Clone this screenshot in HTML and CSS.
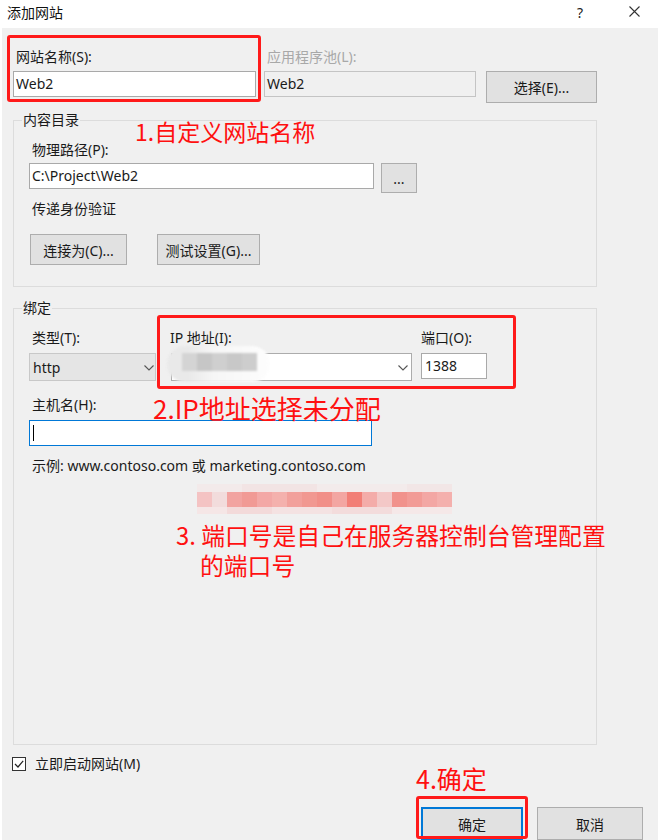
FILE: index.html
```html
<!DOCTYPE html>
<html lang="zh-CN">
<head>
<meta charset="utf-8">
<title>添加网站</title>
<link rel="stylesheet" href="styles.css">
</head>
<body>
<div class="page">
  <header class="titlebar">
    <span class="title">添加网站</span>
    <span class="help">?</span>
    <svg class="close" width="11" height="11" viewBox="0 0 11 11"><path d="M0.5 0.5 L10.5 10.5 M10.5 0.5 L0.5 10.5" stroke="#333" stroke-width="1.1" fill="none"/></svg>
  </header>

  <main class="dialog">
    <div class="site-row">
      <div class="field f-name">
        <label class="lbl">网站名称(S):</label>
        <div class="input">Web2</div>
      </div>
      <div class="field f-pool">
        <label class="lbl disabled">应用程序池(L):</label>
        <div class="input input-disabled">Web2</div>
      </div>
      <button class="btn btn-select">选择(E)...</button>
    </div>

    <fieldset class="group g-content">
      <legend>内容目录</legend>
      <div class="group-body gb-content">
        <label class="lbl lbl-path">物理路径(P):</label>
        <div class="path-row">
          <div class="input input-path">C:\Project\Web2</div>
          <button class="btn btn-dots">...</button>
        </div>
        <div class="lbl lbl-pass">传递身份验证</div>
        <div class="auth-row">
          <button class="btn btn-connect">连接为(C)...</button>
          <button class="btn btn-test">测试设置(G)...</button>
        </div>
      </div>
    </fieldset>

    <fieldset class="group g-bind">
      <legend>绑定</legend>
      <div class="group-body gb-bind">
        <div class="bind-row">
          <div class="field f-type">
            <label class="lbl lbl-type">类型(T):</label>
            <div class="select select-type"><span>http</span>
              <svg class="chev" width="10" height="6" viewBox="0 0 10 6"><path d="M0.5 0.5 L5 5 L9.5 0.5" stroke="#555" stroke-width="1.1" fill="none"/></svg>
            </div>
          </div>
          <div class="field f-ip">
            <label class="lbl lbl-ip">IP 地址(I):</label>
            <div class="select select-ip"><span></span>
              <svg class="chev" width="10" height="6" viewBox="0 0 10 6"><path d="M0.5 0.5 L5 5 L9.5 0.5" stroke="#555" stroke-width="1.1" fill="none"/></svg>
            </div>
          </div>
          <div class="field f-port">
            <label class="lbl lbl-port">端口(O):</label>
            <div class="input input-port">1388</div>
          </div>
        </div>
        <label class="lbl lbl-host">主机名(H):</label>
        <div class="input input-host"><span class="caret"></span></div>
        <div class="lbl lbl-example">示例: www.contoso.com 或 marketing.contoso.com</div>
      </div>
    </fieldset>

    <div class="check-row">
      <svg class="checkbox" width="14" height="14" viewBox="0 0 14 14"><rect x="0.5" y="0.5" width="13" height="13" fill="#fff" stroke="#333"/><path d="M3 7 L6 10 L11.2 3.8" stroke="#222" stroke-width="1.2" fill="none"/></svg>
      <span class="check-label">立即启动网站(M)</span>
    </div>

    <div class="button-row">
      <button class="btn btn-ok">确定</button>
      <button class="btn btn-cancel">取消</button>
    </div>
  </main>

  <div class="blur-ip"><div class="blur-ip-mosaic"></div></div>
  <div class="blur-pink"></div>

  <div class="mark mark-1"></div>
  <div class="mark mark-2"></div>
  <div class="mark mark-4"></div>

  <div class="note note-1">1.自定义网站名称</div>
  <div class="note note-2">2.IP地址选择未分配</div>
  <div class="note note-3"><div>3. 端口号是自己在服务器控制台管理配置</div><div class="note-3b">的端口号</div></div>
  <div class="note note-4">4.确定</div>
</div>
</body>
</html>
```

FILE: styles.css
```css
* { box-sizing: border-box; }

html, body {
  margin: 0;
  padding: 0;
  background: #ffffff;
}

body {
  font-family: "Noto Sans", "Noto Sans CJK SC", sans-serif;
  font-size: 14px;
  color: #1a1a1a;
}

.page {
  position: relative;
  width: 663px;
  height: 840px;
  overflow: hidden;
  background: #ffffff;
}

/* title bar */
.titlebar {
  height: 28px;
  display: flex;
  align-items: flex-start;
  padding: 3px 23px 0 7px;
  background: #ffffff;
}
.title {
  flex: 1;
  line-height: 20px;
  font-size: 14px;
  color: #111;
}
.help {
  width: 10px;
  margin-right: 42px;
  line-height: 20px;
  font-size: 14px;
  color: #222;
}
.close {
  margin-top: 3px;
}

/* dialog body */
.dialog {
  margin-left: 2px;
  width: 656px;
  height: 812px;
  background: #f0f0f0;
  overflow: hidden;
}

.lbl {
  display: block;
  height: 18px;
  line-height: 18px;
  white-space: nowrap;
}
.disabled { color: #a8a8a8; }

.input {
  height: 26px;
  line-height: 24px;
  border: 1px solid #a9a9a9;
  background: #ffffff;
  padding-left: 2px;
  white-space: nowrap;
}
.input-disabled {
  background: #f0f0f0;
  border-color: #c4c4c4;
}

.btn {
  font-family: inherit;
  font-size: 14px;
  color: #1a1a1a;
  background: #e1e1e1;
  border: 1px solid #adadad;
  padding: 0;
  margin: 0;
  height: 31px;
}

.site-row {
  display: flex;
  align-items: flex-start;
  padding: 20px 0 0 11px;
}
.site-row .lbl {
  padding-left: 3px;
  margin-bottom: 5px;
}
.f-name { width: 243px; margin-right: 8px; }
.f-pool { width: 212px; margin-right: 10px; }
.btn-select {
  width: 111px;
  height: 32px;
  margin-top: 23px;
}

/* group boxes */
.group {
  margin: 8px 0 0 11px;
  width: 584px;
  padding: 0;
  border: 1px solid #dcdcdc;
  min-width: 0;
}
.group legend {
  margin-left: 8px;
  padding: 0 1px;
  line-height: 18px;
  height: 18px;
  font-size: 14px;
}
.g-bind { margin-top: 12px; }

.group-body {
  padding: 12px 0 21px 15px;
}
.lbl-path { padding-left: 3px; margin-bottom: 4px; }
.path-row {
  display: flex;
  align-items: flex-start;
  gap: 7px;
}
.input-path { width: 345px; }
.btn-dots { width: 36px; height: 30px; }
.lbl-pass { padding-left: 3px; margin-top: 7px; }
.auth-row {
  display: flex;
  gap: 30px;
  margin: 16px 0 0 1px;
}
.btn-connect { width: 97px; }
.btn-test { width: 103px; }

.gb-bind { padding-bottom: 269px; }
.bind-row {
  display: flex;
  align-items: flex-start;
}
.bind-row .lbl { margin-bottom: 6px; }
.f-type { width: 127px; margin-right: 15px; }
.f-ip { width: 241px; margin-right: 9px; }
.f-port { width: 66px; }
.lbl-type { padding-left: 3px; }
.lbl-ip { margin-left: -1px; }

.select {
  height: 28px;
  border: 1px solid #acacac;
  display: flex;
  align-items: center;
  justify-content: space-between;
  padding: 0 1px 0 3px;
}
.select-type { background: #e5e5e5; border-color: #c8c8c8; }
.select-ip { background: #ffffff; padding-right: 3px; }
.chev { margin-top: 2px; }

.input-port { padding-left: 3px; }

.lbl-host { padding-left: 3px; margin-top: 15px; margin-bottom: 6px; }
.input-host {
  width: 343px;
  border-color: #0078d7;
  display: flex;
  align-items: center;
  padding-left: 3px;
}
.caret {
  width: 1px;
  height: 16px;
  background: #000;
}
.lbl-example { padding-left: 3px; margin-top: 11px; }

.check-row {
  display: flex;
  align-items: center;
  margin-top: 10px;
  padding-left: 10px;
  height: 18px;
}
.checkbox { margin-right: 9px; }
.check-label { line-height: 18px; }

.button-row {
  display: flex;
  justify-content: flex-end;
  gap: 14px;
  margin-top: 34px;
  padding-right: 15px;
}
.btn-ok {
  width: 102px;
  height: 33px;
  border: 2px solid #0078d7;
}
.btn-cancel {
  width: 106px;
  height: 33px;
}

/* privacy blurs laid over the screenshot */
.blur-ip {
  position: absolute;
  left: 167px;
  top: 346px;
  width: 103px;
  height: 36px;
  border-radius: 18px;
  background: linear-gradient(90deg, #e9e9e9 0 20%, #f6f6f6 45%, #fdfdfd 100%);
  filter: blur(1px);
}
.blur-ip-mosaic {
  position: absolute;
  left: 15px;
  top: 7px;
  width: 75px;
  height: 18px;
  background: linear-gradient(90deg,
    #d4d4d4 0 15px, #c6c6c6 15px 30px, #cfcfcf 30px 45px,
    #c8c8c8 45px 60px, #cdcdcd 60px 75px);
}

.blur-pink {
  position: absolute;
  left: 197px;
  top: 484px;
  width: 255px;
  height: 30px;
  background:
    linear-gradient(90deg,
      #f4c3c3 0 15px, #f2dcdc 15px 30px, #f2a3a0 30px 45px, #f19a95 45px 60px,
      #f3a8a6 60px 75px, #f4b1ad 75px 90px, #f2a09b 90px 105px, #f19891 105px 120px,
      #f18f88 120px 135px, #f3a6a2 135px 150px, #f27e76 150px 165px, #f4aca9 165px 180px,
      #f3c8c7 180px 195px, #f1928c 195px 210px, #f29b96 210px 225px, #f3a7a4 225px 240px,
      #f4b0ad 240px 255px) 0 8px / 255px 15px no-repeat,
    linear-gradient(90deg,
      #f5e6e6 0 30px, #f3dada 30px 75px, #f4e2e2 75px 135px, #f3dcdc 135px 195px,
      #f5e8e8 195px 255px) 0 23px / 255px 7px no-repeat,
    linear-gradient(90deg,
      #f3eaea 0 45px, #f2e4e4 45px 120px, #f3ebeb 120px 210px, #f2e6e6 210px 255px) 0 0 / 255px 8px no-repeat;
}

/* red annotation marks */
.mark {
  position: absolute;
  border: 3px solid #ff1a1a;
  border-radius: 3px;
}
.mark-1 { left: 7px; top: 35px; width: 254px; height: 67px; }
.mark-2 { left: 157px; top: 315px; width: 359px; height: 74px; }
.mark-4 { left: 416px; top: 796px; width: 112px; height: 43px; }

.note {
  position: absolute;
  font-family: "Noto Sans CJK SC", "Noto Sans", sans-serif;
  color: #ff1010;
  line-height: 30px;
  white-space: nowrap;
}
.note-1 { left: 135px; top: 116px; font-size: 23px; }
.note-2 { left: 153px; top: 393px; font-size: 26px; }
.note-3 { left: 176px; top: 520px; font-size: 23.8px; }
.note-3b { padding-left: 24px; }
.note-4 { left: 416px; top: 763px; font-size: 25px; }
```
